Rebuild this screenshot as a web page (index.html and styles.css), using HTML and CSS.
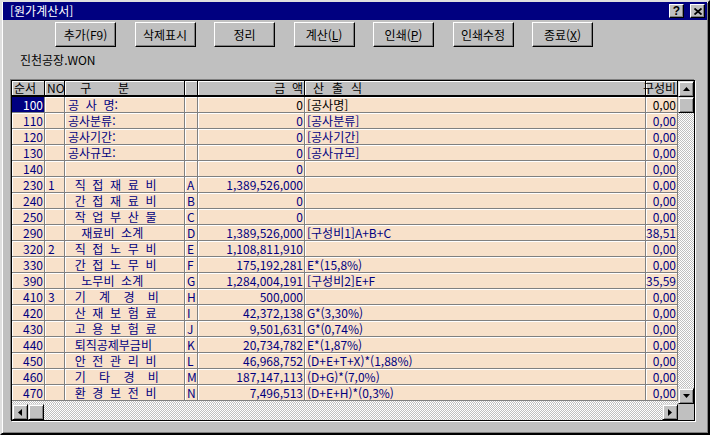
FILE: index.html
```html
<!DOCTYPE html>
<html lang="ko">
<head>
<meta charset="utf-8">
<title>원가계산서</title>
<link rel="stylesheet" href="styles.css">
</head>
<body>
<div class="window">
  <div class="titlebar">
    <span class="title">[원가계산서]</span>
    <div class="title-btns">
      <span class="tbtn help">?</span>
      <span class="tbtn close"><svg width="8" height="7" viewBox="0 0 8 7"><path d="M0.5 0.5 L7.5 6.5 M7.5 0.5 L0.5 6.5" stroke="#000" stroke-width="1.8" fill="none"/></svg></span>
    </div>
  </div>
  <div class="toolbar">
    <button class="btn">추가(F9)</button>
    <button class="btn">삭제표시</button>
    <button class="btn">정리</button>
    <button class="btn">계산(<u>L</u>)</button>
    <button class="btn">인쇄(<u>P</u>)</button>
    <button class="btn">인쇄수정</button>
    <button class="btn">종료(<u>X</u>)</button>
  </div>
  <div class="company">진천공장.WON</div>
  <div class="grid">
    <div class="grid-main">
      <div class="table">
        <div class="row head">
          <div class="h">순서</div>
          <div class="h">NO</div>
          <div class="h g">  구    분</div>
          <div class="h"></div>
          <div class="h r">금  액</div>
          <div class="h formula-h">산출식</div>
          <div class="h r">구성비</div>
        </div>
        <div class="row"><div class="c r sel">100</div><div class="c"></div><div class="c g">공 사 명:</div><div class="c"></div><div class="c r blk">0</div><div class="c f blk">[공사명]</div><div class="c r blk">0,00</div></div>
        <div class="row"><div class="c r">110</div><div class="c"></div><div class="c g">공사분류:</div><div class="c"></div><div class="c r">0</div><div class="c f">[공사분류]</div><div class="c r">0,00</div></div>
        <div class="row"><div class="c r">120</div><div class="c"></div><div class="c g">공사기간:</div><div class="c"></div><div class="c r">0</div><div class="c f">[공사기간]</div><div class="c r">0,00</div></div>
        <div class="row"><div class="c r">130</div><div class="c"></div><div class="c g">공사규모:</div><div class="c"></div><div class="c r">0</div><div class="c f">[공사규모]</div><div class="c r">0,00</div></div>
        <div class="row"><div class="c r">140</div><div class="c"></div><div class="c g"></div><div class="c"></div><div class="c r">0</div><div class="c f"></div><div class="c r">0,00</div></div>
        <div class="row"><div class="c r">230</div><div class="c n">1</div><div class="c g"> 직 접 재 료 비</div><div class="c k">A</div><div class="c r">1,389,526,000</div><div class="c f"></div><div class="c r">0,00</div></div>
        <div class="row"><div class="c r">240</div><div class="c"></div><div class="c g"> 간 접 재 료 비</div><div class="c k">B</div><div class="c r">0</div><div class="c f"></div><div class="c r">0,00</div></div>
        <div class="row"><div class="c r">250</div><div class="c"></div><div class="c g"> 작 업 부 산 물</div><div class="c k">C</div><div class="c r">0</div><div class="c f"></div><div class="c r">0,00</div></div>
        <div class="row"><div class="c r">290</div><div class="c"></div><div class="c g">  재료비 소계</div><div class="c k">D</div><div class="c r">1,389,526,000</div><div class="c f">[구성비1]A+B+C</div><div class="c r">38,51</div></div>
        <div class="row"><div class="c r">320</div><div class="c n">2</div><div class="c g"> 직 접 노 무 비</div><div class="c k">E</div><div class="c r">1,108,811,910</div><div class="c f"></div><div class="c r">0,00</div></div>
        <div class="row"><div class="c r">330</div><div class="c"></div><div class="c g"> 간 접 노 무 비</div><div class="c k">F</div><div class="c r">175,192,281</div><div class="c f">E*(15,8%)</div><div class="c r">0,00</div></div>
        <div class="row"><div class="c r">390</div><div class="c"></div><div class="c g">  노무비 소계</div><div class="c k">G</div><div class="c r">1,284,004,191</div><div class="c f">[구성비2]E+F</div><div class="c r">35,59</div></div>
        <div class="row"><div class="c r">410</div><div class="c n">3</div><div class="c g"> 기  계  경  비</div><div class="c k">H</div><div class="c r">500,000</div><div class="c f"></div><div class="c r">0,00</div></div>
        <div class="row"><div class="c r">420</div><div class="c"></div><div class="c g"> 산 재 보 험 료</div><div class="c k">I</div><div class="c r">42,372,138</div><div class="c f">G*(3,30%)</div><div class="c r">0,00</div></div>
        <div class="row"><div class="c r">430</div><div class="c"></div><div class="c g"> 고 용 보 험 료</div><div class="c k">J</div><div class="c r">9,501,631</div><div class="c f">G*(0,74%)</div><div class="c r">0,00</div></div>
        <div class="row"><div class="c r">440</div><div class="c"></div><div class="c g"> 퇴직공제부금비</div><div class="c k">K</div><div class="c r">20,734,782</div><div class="c f">E*(1,87%)</div><div class="c r">0,00</div></div>
        <div class="row"><div class="c r">450</div><div class="c"></div><div class="c g"> 안 전 관 리 비</div><div class="c k">L</div><div class="c r">46,968,752</div><div class="c f">(D+E+T+X)*(1,88%)</div><div class="c r">0,00</div></div>
        <div class="row"><div class="c r">460</div><div class="c"></div><div class="c g"> 기  타  경  비</div><div class="c k">M</div><div class="c r">187,147,113</div><div class="c f">(D+G)*(7,0%)</div><div class="c r">0,00</div></div>
        <div class="row"><div class="c r">470</div><div class="c"></div><div class="c g"> 환 경 보 전 비</div><div class="c k">N</div><div class="c r">7,496,513</div><div class="c f">(D+E+H)*(0,3%)</div><div class="c r">0,00</div></div>
      </div>
      <div class="vscroll">
        <div class="sbtn"><svg width="7" height="4" viewBox="0 0 7 4"><path d="M3.5 0 L7 4 L0 4 Z" fill="#000"/></svg></div>
        <div class="sthumb"></div>
        <div class="strack"></div>
        <div class="sbtn"><svg width="7" height="4" viewBox="0 0 7 4"><path d="M0 0 L7 0 L3.5 4 Z" fill="#000"/></svg></div>
      </div>
    </div>
    <div class="grid-bottom">
      <div class="hscroll">
        <div class="sbtn"><svg width="4" height="7" viewBox="0 0 4 7"><path d="M0 3.5 L4 0 L4 7 Z" fill="#000"/></svg></div>
        <div class="sthumb"></div>
        <div class="strack"></div>
        <div class="sbtn"><svg width="4" height="7" viewBox="0 0 4 7"><path d="M0 0 L4 3.5 L0 7 Z" fill="#000"/></svg></div>
      </div>
      <div class="corner"></div>
    </div>
  </div>
</div>
</body>
</html>
```
FILE: styles.css
```css
* { box-sizing: border-box; }
body { margin: 0; background: #c0c0c0; }

.window {
  width: 710px;
  height: 435px;
  background: #c0c0c0;
  border: 2px solid;
  border-color: #dfdfdf #000 #000 #dfdfdf;
  box-shadow: inset 1px 1px 0 #fff, inset -1px -1px 0 #808080;
  padding: 0 1px;
  display: flex;
  flex-direction: column;
  font-family: "Noto Sans CJK KR", "Noto Sans", sans-serif;
  font-size: 12px;
  color: #000;
}

.titlebar {
  height: 18px;
  background: #000080;
  color: #fff;
  display: flex;
  align-items: center;
  padding: 0 2px 0 7px;
}
.title { line-height: 18px; }
.title-btns { margin-left: auto; display: flex; gap: 6px; }
.tbtn {
  width: 15px;
  height: 14px;
  background: #c0c0c0;
  border: 1px solid;
  border-color: #fff #000 #000 #fff;
  box-shadow: inset -1px -1px 0 #808080;
  display: flex;
  align-items: center;
  justify-content: center;
  font: bold 12px "Liberation Sans", sans-serif;
  color: #000;
  line-height: 12px;
}

.toolbar {
  margin-top: 2px;
  padding-left: 52px;
  display: flex;
  gap: 18.5px;
}
.btn {
  width: 61px;
  height: 25px;
  padding: 0;
  background: #c0c0c0;
  border: 1px solid;
  border-color: #fff #000 #000 #fff;
  box-shadow: inset -1px -1px 0 #808080;
  font-family: "Noto Sans CJK KR", sans-serif;
  font-size: 12px;
  color: #000;
  line-height: 14px;
}

.company {
  margin-top: 6px;
  padding-left: 17px;
  line-height: 14px;
  height: 14px;
}

.grid {
  margin: 13px 0 0 8px;
  width: 684px;
  height: 341px;
  border: 1px solid #000;
  box-shadow: -1px -1px 0 #808080, 1px 1px 0 #fff;
  display: flex;
  flex-direction: column;
  background: #c0c0c0;
}
.grid-main { height: 323px; display: flex; }
.table {
  flex: 1;
  background: repeating-conic-gradient(#c0c0c0 0 25%, #fff 0 50%) 0 0 / 2px 2px;
}
.row {
  display: grid;
  grid-template-columns: 33px 20px 120px 13px 107px 341px 32px;
  height: 16px;
}
.c {
  background: #f8e1ca;
  color: #000080;
  border-right: 1px solid #808080;
  border-bottom: 1px solid #808080;
  box-shadow: inset 1px 1px 0 #fff;
  line-height: 14px;
  padding: 1px 2px 0 3px;
  white-space: pre;
}
.r { padding-right: 1px; padding-left: 0; display: flex; justify-content: flex-end; }
.g { padding-left: 3px; word-spacing: 3.3px; }
.f { padding-left: 2px; }
.k { padding-left: 2px; }
.n { padding-left: 3px; }
.blk { color: #000; }
.sel { background: #000080; color: #fff; box-shadow: none; }

.head { height: 16px; }
.h {
  background: #c0c0c0;
  color: #000;
  border-right: 1px solid #000;
  border-bottom: 2px solid #000;
  box-shadow: inset 1px 1px 0 #fff;
  line-height: 14px;
  padding: 0 1px 0 2px;
  white-space: pre;
}
.h.g { word-spacing: 3.3px; }
.h.r { display: flex; justify-content: flex-end; padding-right: 1px; }
.formula-h { padding-left: 8px; letter-spacing: 8px; }

.vscroll { width: 16px; display: flex; flex-direction: column; }
.hscroll { flex: 1; display: flex; }
.grid-bottom { height: 16px; display: flex; }
.corner { width: 16px; background: #c0c0c0; }

.sbtn, .sthumb {
  width: 16px;
  height: 16px;
  flex: none;
  background: #c0c0c0;
  border: 1px solid;
  border-color: #dfdfdf #000 #000 #dfdfdf;
  box-shadow: inset 1px 1px 0 #fff, inset -1px -1px 0 #808080;
  display: flex;
  align-items: center;
  justify-content: center;
}
.strack {
  flex: 1;
  background: repeating-conic-gradient(#c0c0c0 0 25%, #fff 0 50%) 0 0 / 2px 2px;
}
```
